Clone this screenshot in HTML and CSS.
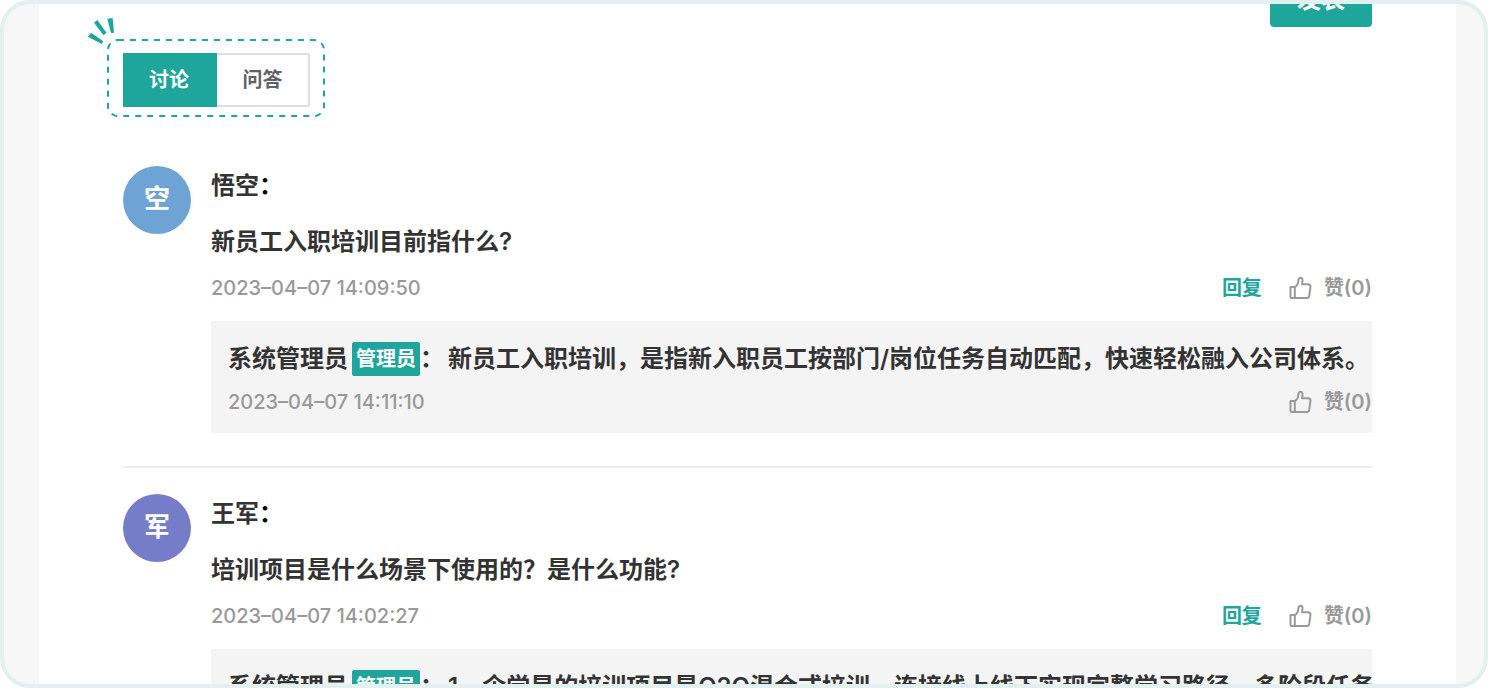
FILE: index.html
```
<!DOCTYPE html>
<html lang="zh-CN">
<head>
    <meta charset="UTF-8">
    <meta name="viewport" content="width=device-width, initial-scale=1.0">
    <title>讨论</title>
    <link rel="stylesheet" href="styles.css">
</head>
<body>

    <svg class="sprite" aria-hidden="true">
        <symbol id="thumb" viewBox="0 0 24 24">
            <path d="M2.500 11h4.300v10.900H3.500a1 1 0 0 1-1-1z"/>
            <path d="M6.800 11c2.600-1.200 3.400-3 3.600-6.600.1-1.700.8-2.600 2.100-2.600 1.500 0 2.200 1.200 2 3l-.5 3.500h6.300c1.500 0 2.400 1 2.200 2.400l-1.300 9.300c-.2 1.200-1 1.900-2.200 1.900H6.800"/>
        </symbol>
    </svg>

    <div class="frame">
        <main class="panel">
            <div class="composer">
                <button type="button" class="btn-post">发表</button>
            </div>

            <div class="tabs-wrap">
                <svg class="tabs-outline" aria-hidden="true"><rect x="1" y="1" rx="10"/></svg>
                <svg class="spark" viewBox="0 0 28 28" aria-hidden="true">
                    <path d="M3 14.700L15.300 23.300L13.700 26L0 18.700zM6 4.700L9.300 2L18.500 14.700L15.500 17.300zM19.300 .7L24.700 0L26 14.700L23 15z"/>
                </svg>
                <div class="tabs">
                    <button type="button" class="tab active">讨论</button>
                    <button type="button" class="tab">问答</button>
                </div>
            </div>

            <article class="comment">
                <div class="avatar blue">空</div>
                <div class="comment-body">
                    <p class="name">悟空<span>：</span></p>
                    <p class="question">新员工入职培训目前指什么?</p>
                    <div class="meta">
                        <time>2023–04–07 14:09:50</time>
                        <a href="#" class="reply-link">回复</a>
                        <button type="button" class="like"><svg><use href="#thumb"/></svg>赞(0)</button>
                    </div>
                    <div class="reply">
                        <p>系统管理员<span class="badge">管理员</span>：<span class="answer">新员工入职培训，是指新入职员工按部门/岗位任务自动匹配，快速轻松融入公司体系。</span></p>
                        <div class="meta">
                            <time>2023–04–07 14:11:10</time>
                            <button type="button" class="like"><svg><use href="#thumb"/></svg>赞(0)</button>
                        </div>
                    </div>
                </div>
            </article>

            <article class="comment">
                <div class="avatar purple">军</div>
                <div class="comment-body">
                    <p class="name">王军<span>：</span></p>
                    <p class="question">培训项目是什么场景下使用的？是什么功能?</p>
                    <div class="meta">
                        <time>2023–04–07 14:02:27</time>
                        <a href="#" class="reply-link">回复</a>
                        <button type="button" class="like"><svg><use href="#thumb"/></svg>赞(0)</button>
                    </div>
                    <div class="reply">
                        <p>系统管理员<span class="badge">管理员</span>：<span class="answer">1、企学是的培训项目是O2O混合式培训，连接线上线下实现完整学习路径，多阶段任务</span></p>
                    </div>
                </div>
            </article>
        </main>
    </div>

</body>
</html>
```
FILE: styles.css
```
* {
    box-sizing: border-box;
}

body {
    margin: 0;
    background-color: #fff;
    font-family: Inter, "Noto Sans CJK SC", sans-serif;
    font-weight: 600;
    color: #333;
}

p {
    margin: 0;
}

button {
    font-family: inherit;
    font-weight: 600;
    border: none;
    padding: 0;
    cursor: pointer;
}

.sprite {
    display: none;
}

.frame {
    height: 100vh;
    overflow: hidden;
    padding: 0 28px 0 35px;
    background-color: #f7f7f7;
    border: 4px solid #e1f1ef;
    border-radius: 30px;
}

.panel {
    min-height: 100%;
    padding: 0 84px;
    background-color: #fff;
}

/* the list is scrolled past the top of the post button */
.composer {
    display: flex;
    justify-content: flex-end;
    margin-top: -33px;
}

.btn-post {
    width: 102px;
    height: 56px;
    padding-bottom: 4px;
    background-color: #1fa69c;
    border-radius: 4px;
    color: #fff;
    font-size: 24px;
}

.tabs-wrap {
    position: relative;
    width: fit-content;
    margin: 12px 0 49px -16px;
    padding: 14px 15px 10px 16px;
}

.tabs-outline {
    position: absolute;
    top: 0;
    left: 0;
    width: 100%;
    height: 100%;
}

.tabs-outline rect {
    width: calc(100% - 2px);
    height: calc(100% - 2px);
    fill: none;
    stroke: #1fa69c;
    stroke-width: 2;
    stroke-dasharray: 6 6;
}

.spark {
    position: absolute;
    top: -21px;
    left: -19px;
    width: 28px;
    height: 28px;
    fill: #1fa69c;
}

.tabs {
    position: relative;
    display: flex;
}

.tab {
    width: 93px;
    height: 54px;
    padding-bottom: 4px;
    background-color: #fff;
    border: 2px solid #dcdfe6;
    border-left: none;
    color: #606266;
    font-size: 20px;
}

.tab.active {
    width: 94px;
    background-color: #1fa69c;
    border-color: #1fa69c;
    color: #fff;
}

.comment {
    display: flex;
    gap: 20px;
    margin-bottom: 26px;
    padding-bottom: 33px;
    border-bottom: 2px solid #ededed;
}

.avatar {
    flex: none;
    width: 68px;
    height: 68px;
    border-radius: 50%;
    color: #fff;
    font-size: 26px;
    line-height: 66px;
    text-align: center;
}

.blue {
    background-color: #6ea4d5;
}

.purple {
    background-color: #767dc8;
}

.comment-body {
    flex: 1;
    min-width: 0;
}

.name,
.question {
    font-size: 24px;
    line-height: 40px;
}

.name span {
    color: #000;
}

.question {
    margin-top: 16px;
}

.meta {
    display: flex;
    align-items: center;
    margin-top: 9px;
    font-size: 20px;
    line-height: 34px;
    color: #999;
}

.meta time {
    margin-right: auto;
    font-weight: 500;
}

.reply-link {
    color: #1fa69c;
    text-decoration: none;
}

.like {
    display: flex;
    align-items: center;
    gap: 12px;
    margin-left: 26px;
    background: none;
    color: #999;
    font-size: 20px;
    line-height: 34px;
}

.like svg {
    width: 24px;
    height: 24px;
    fill: none;
    stroke: #999;
    stroke-width: 2;
    stroke-linejoin: round;
}

.reply {
    margin-top: 16px;
    padding: 21px 0 14px 17px;
    background-color: #f4f4f4;
}

.reply p {
    font-size: 24px;
    line-height: 34px;
    white-space: nowrap;
}

.badge {
    display: inline-block;
    margin-left: 4px;
    padding: 0 4px;
    background-color: #1fa69c;
    border-radius: 2px;
    color: #fff;
    font-size: 20px;
    vertical-align: top;
}

.answer {
    margin-left: 4px;
}
```
